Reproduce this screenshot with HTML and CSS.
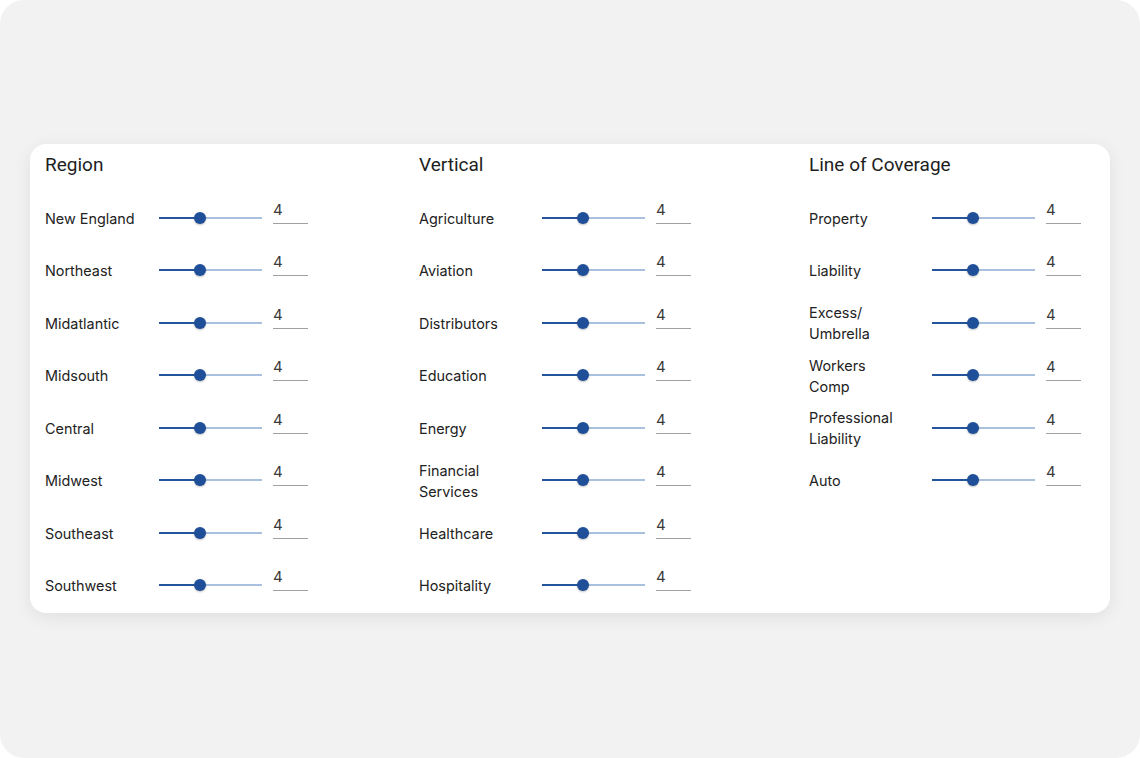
FILE: index.html
```html
<!DOCTYPE html>
<html>
<head>
<meta charset="utf-8">
<link rel="stylesheet" href="styles.css">
</head>
<body>
<div class="screen">
  <div class="card">
    <section class="col col-region">
      <h2 class="col-title">Region</h2>
      <div class="row"><span class="label">New England</span><div class="slider"><div class="fill"></div><div class="thumb"></div></div><span class="num">4</span></div>
      <div class="row"><span class="label">Northeast</span><div class="slider"><div class="fill"></div><div class="thumb"></div></div><span class="num">4</span></div>
      <div class="row"><span class="label">Midatlantic</span><div class="slider"><div class="fill"></div><div class="thumb"></div></div><span class="num">4</span></div>
      <div class="row"><span class="label">Midsouth</span><div class="slider"><div class="fill"></div><div class="thumb"></div></div><span class="num">4</span></div>
      <div class="row"><span class="label">Central</span><div class="slider"><div class="fill"></div><div class="thumb"></div></div><span class="num">4</span></div>
      <div class="row"><span class="label">Midwest</span><div class="slider"><div class="fill"></div><div class="thumb"></div></div><span class="num">4</span></div>
      <div class="row"><span class="label">Southeast</span><div class="slider"><div class="fill"></div><div class="thumb"></div></div><span class="num">4</span></div>
      <div class="row"><span class="label">Southwest</span><div class="slider"><div class="fill"></div><div class="thumb"></div></div><span class="num">4</span></div>
    </section>
    <section class="col col-vertical">
      <h2 class="col-title">Vertical</h2>
      <div class="row"><span class="label">Agriculture</span><div class="slider"><div class="fill"></div><div class="thumb"></div></div><span class="num">4</span></div>
      <div class="row"><span class="label">Aviation</span><div class="slider"><div class="fill"></div><div class="thumb"></div></div><span class="num">4</span></div>
      <div class="row"><span class="label">Distributors</span><div class="slider"><div class="fill"></div><div class="thumb"></div></div><span class="num">4</span></div>
      <div class="row"><span class="label">Education</span><div class="slider"><div class="fill"></div><div class="thumb"></div></div><span class="num">4</span></div>
      <div class="row"><span class="label">Energy</span><div class="slider"><div class="fill"></div><div class="thumb"></div></div><span class="num">4</span></div>
      <div class="row"><span class="label">Financial Services</span><div class="slider"><div class="fill"></div><div class="thumb"></div></div><span class="num">4</span></div>
      <div class="row"><span class="label">Healthcare</span><div class="slider"><div class="fill"></div><div class="thumb"></div></div><span class="num">4</span></div>
      <div class="row"><span class="label">Hospitality</span><div class="slider"><div class="fill"></div><div class="thumb"></div></div><span class="num">4</span></div>
    </section>
    <section class="col col-coverage">
      <h2 class="col-title">Line of Coverage</h2>
      <div class="row"><span class="label">Property</span><div class="slider"><div class="fill"></div><div class="thumb"></div></div><span class="num">4</span></div>
      <div class="row"><span class="label">Liability</span><div class="slider"><div class="fill"></div><div class="thumb"></div></div><span class="num">4</span></div>
      <div class="row"><span class="label">Excess/ Umbrella</span><div class="slider"><div class="fill"></div><div class="thumb"></div></div><span class="num">4</span></div>
      <div class="row"><span class="label">Workers Comp</span><div class="slider"><div class="fill"></div><div class="thumb"></div></div><span class="num">4</span></div>
      <div class="row"><span class="label">Professional Liability</span><div class="slider"><div class="fill"></div><div class="thumb"></div></div><span class="num">4</span></div>
      <div class="row"><span class="label">Auto</span><div class="slider"><div class="fill"></div><div class="thumb"></div></div><span class="num">4</span></div>
    </section>
  </div>
</div>
</body>
</html>
```

FILE: styles.css
```css
html, body {
  margin: 0;
  padding: 0;
  background: #ffffff;
}
body {
  font-family: Inter, "Noto Sans", Roboto, sans-serif;
  color: #222222;
}
.screen {
  box-sizing: border-box;
  width: 1140px;
  height: 758px;
  background: #f2f2f2;
  border-radius: 24px;
  padding: 144px 30px 0 30px;
}
.card {
  box-sizing: border-box;
  height: 469px;
  background: #ffffff;
  border-radius: 16px;
  box-shadow: 0 4px 18px rgba(0, 0, 0, 0.08);
  padding: 8px 15px 0 15px;
  display: grid;
  grid-template-columns: 374px 390px 1fr;
}
.col-title {
  margin: 1px 0 14.75px 0;
  font-family: Roboto, "Noto Sans", sans-serif;
  font-size: 19px;
  line-height: 24px;
  font-weight: 400;
  color: #1e1e1e;
}
.row {
  height: 52.5px;
  display: flex;
  align-items: center;
}
.label {
  flex: none;
  font-size: 14.4px;
  line-height: 21px;
  color: #222222;
}
.col-region .label { width: 114px; }
.col-vertical .label { width: 110px; margin-right: 13px; }
.col-coverage .label { width: 95px; margin-right: 28px; }
.slider {
  position: relative;
  flex: none;
  width: 103px;
  height: 2px;
  background: #a9c1de;
  margin-top: -1px;
}
.fill {
  width: 40%;
  height: 100%;
  background: #24549b;
}
.thumb {
  position: absolute;
  left: 40%;
  top: 50%;
  width: 12px;
  height: 12px;
  margin: -6px 0 0 -6px;
  border-radius: 50%;
  background: #1f4f98;
  box-shadow: 0 1px 2px rgba(0, 0, 0, 0.25);
}
.num {
  box-sizing: border-box;
  flex: none;
  width: 35px;
  height: 24px;
  margin-left: 11px;
  margin-bottom: 13px;
  font-size: 15px;
  line-height: 20px;
  color: #3a3a3a;
  border-bottom: 1px solid #a0a0a0;
}
```
